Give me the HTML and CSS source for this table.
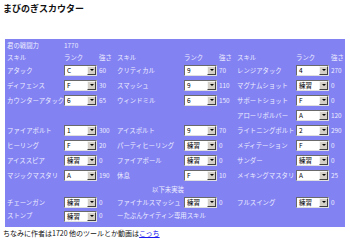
FILE: index.html
```html
<!DOCTYPE html>
<html lang="ja">
<head>
<meta charset="utf-8">
<link rel="stylesheet" href="styles.css">
</head>
<body>
<h1 class="title">まびのぎスカウター</h1>
<table class="scouter">
  <colgroup>
    <col class="c-name1"><col class="c-rank"><col class="c-str">
    <col class="c-name2"><col class="c-rank"><col class="c-str">
    <col class="c-name3"><col class="c-rank"><col class="c-str3">
  </colgroup>
  <tr class="row-head"><td>君の戦闘力</td><td colspan="8">1770</td></tr>
  <tr class="row-head"><td>スキル</td><td>ランク</td><td>強さ</td><td>スキル</td><td>ランク</td><td>強さ</td><td>スキル</td><td>ランク</td><td>強さ</td></tr>
  <tr class="row">
    <td>アタック</td><td><span class="sel"><span class="val">C</span><span class="btn"></span></span></td><td>60</td>
    <td>クリティカル</td><td><span class="sel"><span class="val">9</span><span class="btn"></span></span></td><td>70</td>
    <td>レンジアタック</td><td><span class="sel"><span class="val">4</span><span class="btn"></span></span></td><td>270</td>
  </tr>
  <tr class="row">
    <td>ディフェンス</td><td><span class="sel"><span class="val">F</span><span class="btn"></span></span></td><td>30</td>
    <td>スマッシュ</td><td><span class="sel"><span class="val">9</span><span class="btn"></span></span></td><td>110</td>
    <td>マグナムショット</td><td><span class="sel"><span class="val">練習</span><span class="btn"></span></span></td><td>0</td>
  </tr>
  <tr class="row">
    <td>カウンターアタック</td><td><span class="sel"><span class="val">6</span><span class="btn"></span></span></td><td>65</td>
    <td>ウィンドミル</td><td><span class="sel"><span class="val">6</span><span class="btn"></span></span></td><td>150</td>
    <td>サポートショット</td><td><span class="sel"><span class="val">F</span><span class="btn"></span></span></td><td>0</td>
  </tr>
  <tr class="row">
    <td></td><td></td><td></td>
    <td></td><td></td><td></td>
    <td>アローリボルバー</td><td><span class="sel"><span class="val">A</span><span class="btn"></span></span></td><td>120</td>
  </tr>
  <tr class="row">
    <td>ファイアボルト</td><td><span class="sel"><span class="val">1</span><span class="btn"></span></span></td><td>300</td>
    <td>アイスボルト</td><td><span class="sel"><span class="val">9</span><span class="btn"></span></span></td><td>70</td>
    <td>ライトニングボルト</td><td><span class="sel"><span class="val">2</span><span class="btn"></span></span></td><td>290</td>
  </tr>
  <tr class="row">
    <td>ヒーリング</td><td><span class="sel"><span class="val">F</span><span class="btn"></span></span></td><td>20</td>
    <td>パーティヒーリング</td><td><span class="sel"><span class="val">練習</span><span class="btn"></span></span></td><td>0</td>
    <td>メディテーション</td><td><span class="sel"><span class="val">F</span><span class="btn"></span></span></td><td>0</td>
  </tr>
  <tr class="row">
    <td>アイススピア</td><td><span class="sel"><span class="val">練習</span><span class="btn"></span></span></td><td>0</td>
    <td>ファイアボール</td><td><span class="sel"><span class="val">練習</span><span class="btn"></span></span></td><td>0</td>
    <td>サンダー</td><td><span class="sel"><span class="val">練習</span><span class="btn"></span></span></td><td>0</td>
  </tr>
  <tr class="row">
    <td>マジックマスタリ</td><td><span class="sel"><span class="val">A</span><span class="btn"></span></span></td><td>190</td>
    <td>休息</td><td><span class="sel"><span class="val">F</span><span class="btn"></span></span></td><td>10</td>
    <td>メイキングマスタリ</td><td><span class="sel"><span class="val">A</span><span class="btn"></span></span></td><td>25</td>
  </tr>
  <tr class="row-note"><td colspan="8" class="center">以下未実装</td><td></td></tr>
  <tr class="row">
    <td>チェーンガン</td><td><span class="sel"><span class="val">練習</span><span class="btn"></span></span></td><td>0</td>
    <td>ファイナルスマッシュ</td><td><span class="sel"><span class="val">練習</span><span class="btn"></span></span></td><td>0</td>
    <td>フルスイング</td><td><span class="sel"><span class="val">練習</span><span class="btn"></span></span></td><td>0</td>
  </tr>
  <tr class="row row-last">
    <td>ストンプ</td><td><span class="sel"><span class="val">練習</span><span class="btn"></span></span></td><td>0</td>
    <td colspan="6">ーたぶんケイティン専用スキル</td>
  </tr>
</table>
<p class="footer">ちなみに作者は1720 他のツールとか動画は<a class="link" href="#">こっち</a></p>
</body>
</html>
```

FILE: styles.css
```css
html, body {
  margin: 0;
  padding: 0;
  background: #ffffff;
}
body {
  padding: 3px 4px 0 3px;
  font-family: "Noto Sans CJK JP", "Noto Sans", sans-serif;
}
.title {
  margin: 0 0 25px 0;
  font-size: 9px;
  line-height: 11px;
  font-weight: bold;
  color: #111;
}
.scouter {
  width: 340px;
  margin-left: 2px;
  border-collapse: collapse;
  table-layout: fixed;
  background: #8282f2;
  color: #eeeeff;
  font-size: 6.4px;
  line-height: 9px;
}
.c-name1 { width: 57px; }
.c-rank { width: 35px; }
.c-str { width: 18px; }
.c-name2 { width: 67px; }
.c-name3 { width: 59px; }
.c-str3 { width: 16px; }
.scouter td {
  padding: 0 0 0 2px;
  white-space: nowrap;
  overflow: visible;
  vertical-align: middle;
}
.row-head td { height: 12px; }
.row td { height: 15px; }
.row-note td { height: 12px; }
.row-last td { height: 16px; vertical-align: top; padding-top: 1px; }
.center { text-align: center; }
.sel {
  display: flex;
  align-items: stretch;
  width: 31px;
  height: 9px;
  background: #ffffff;
  border-top: 1px solid #6a6a6a;
  border-left: 1px solid #6a6a6a;
  border-right: 1px solid #e0e0e0;
  border-bottom: 1px solid #e0e0e0;
  color: #000;
}
.val {
  flex: 1;
  padding-left: 2px;
  font-size: 6.5px;
  line-height: 9px;
  overflow: hidden;
}
.btn {
  position: relative;
  width: 9px;
  background: #d4d0c8;
  border-left: 1px solid #f4f4f4;
  border-top: 1px solid #f4f4f4;
  border-right: 1px solid #404040;
  border-bottom: 1px solid #404040;
  box-sizing: border-box;
}
.btn::after {
  content: "";
  position: absolute;
  left: 1.5px;
  top: 2px;
  border-left: 2px solid transparent;
  border-right: 2px solid transparent;
  border-top: 2px solid #000;
}
.footer {
  margin: 2px 0 0 0;
  font-size: 7px;
  line-height: 9px;
  color: #111;
}
.link {
  color: #1a1aee;
  text-decoration: underline;
}
```
